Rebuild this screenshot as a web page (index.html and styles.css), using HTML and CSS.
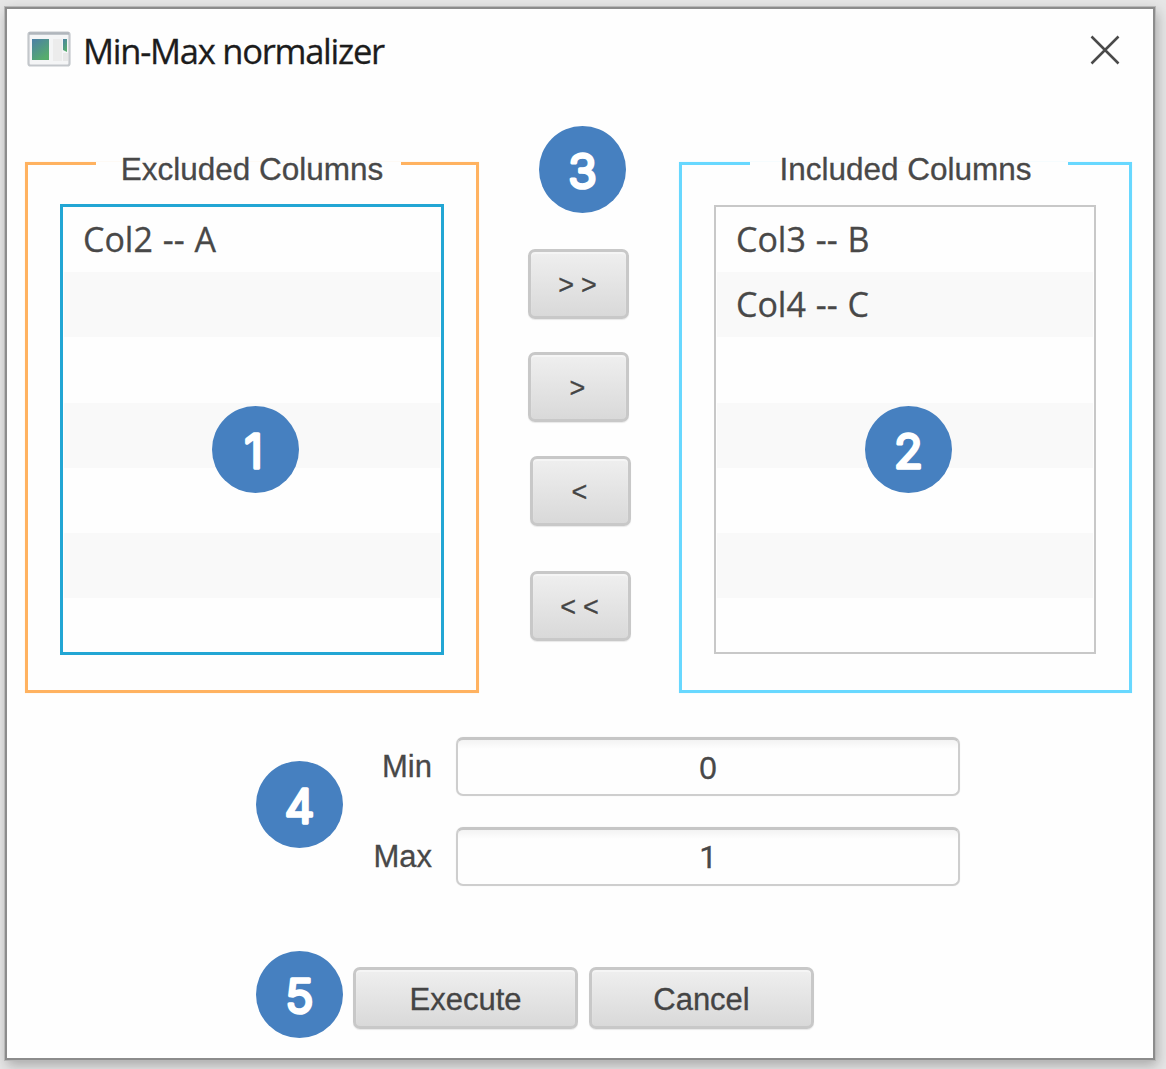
FILE: index.html
```html
<!DOCTYPE html>
<html lang="en">
<head>
<meta charset="utf-8">
<title>Min-Max normalizer</title>
<link rel="stylesheet" href="styles.css">
</head>
<body>
<main class="window">
  <header class="titlebar">
    <svg class="app-icon" width="44" height="37" viewBox="0 0 44 37">
      <defs>
        <linearGradient id="pane" x1="0" y1="0" x2=".6" y2="1"><stop offset="0" stop-color="#4b7fa6"/><stop offset="1" stop-color="#56ad6c"/></linearGradient>
      </defs>
      <rect x="1.5" y="1.5" width="41" height="33" rx="2" fill="#f4f5f6" stroke="#c3c7cb" stroke-width="2.2"/>
      <path d="M2 2.500H42" stroke="#b0b6bc" stroke-width="2.6"/>
      <rect x="5" y="8" width="17" height="21" fill="url(#pane)"/>
      <rect x="26" y="8" width="9" height="22" fill="#ececec"/>
      <path d="M36 8H40V21L36 19Z" fill="url(#pane)"/>
      <path d="M36 22H41V30H36Z" fill="#e8e8e8"/>
    </svg>
    <h1 class="title">Min-Max normalizer</h1>
    <svg class="close" width="30" height="30" viewBox="0 0 30 30"><path d="M1.500 1.500L28.500 28.500M28.500 1.500L1.500 28.500" stroke="#4a4a4a" stroke-width="2.5"/></svg>
  </header>

  <section class="panels">
    <div class="group excluded">
      <div class="caption"><span class="rule"></span><span class="caption-text">Excluded Columns</span><span class="rule end"></span></div>
      <ul class="list focused">
        <li>Col2 -- A</li><li></li><li></li><li></li><li></li><li></li><li></li>
      </ul>
      <svg class="badge over" viewBox="0 0 87 87"><circle cx="43.500" cy="43.500" r="43.500"/><text x="41.500" y="61.500">1</text></svg>
    </div>
    <div class="transfer">
      <svg class="badge" viewBox="0 0 87 87"><circle cx="43.500" cy="43.500" r="43.500"/><text x="43.500" y="61.500">3</text></svg>
      <button class="button move first">&gt;&gt;</button>
      <button class="button move second">&gt;</button>
      <button class="button move third">&lt;</button>
      <button class="button move fourth">&lt;&lt;</button>
    </div>
    <div class="group included">
      <div class="caption"><span class="rule"></span><span class="caption-text">Included Columns</span><span class="rule end"></span></div>
      <ul class="list">
        <li>Col3 -- B</li><li>Col4 -- C</li><li></li><li></li><li></li><li></li><li></li>
      </ul>
      <svg class="badge over" viewBox="0 0 87 87"><circle cx="43.500" cy="43.500" r="43.500"/><text x="43.500" y="61.500">2</text></svg>
    </div>
  </section>

  <section class="range">
    <svg class="badge" viewBox="0 0 87 87"><circle cx="43.500" cy="43.500" r="43.500"/><text x="43.500" y="61.500">4</text></svg>
    <div class="fields">
      <label class="label">Min</label><div class="field">0</div>
      <label class="label">Max</label><div class="field one">1</div>
    </div>
  </section>

  <footer class="actions">
    <svg class="badge" viewBox="0 0 87 87"><circle cx="43.500" cy="43.500" r="43.500"/><text x="43.500" y="61.500">5</text></svg>
    <button class="button action">Execute</button>
    <button class="button action">Cancel</button>
  </footer>
</main>
</body>
</html>
```

FILE: styles.css
```css
* { box-sizing: border-box; }
html { height: 100%; overflow: hidden; }
body {
  margin: 0;
  height: 1069px;
  padding: 7px 11px 9px 5px;
  overflow: hidden;
  background: #e6e6e6;
  font-family: "Liberation Sans", Arial, sans-serif;
  font-size: 31.5px;
  color: #484848;
  -webkit-text-stroke: .3px;
}
.window {
  height: 1053px;
  border: 2px solid #8c8c8c;
  background: #fefefe;
  box-shadow: 0 0 0 1px #b8b8b8, 2px 5px 12px rgba(0, 0, 0, .28);
}
.titlebar {
  display: flex;
  align-items: center;
  height: 84px;
  padding: 0 33px 4px 20px;
}
.app-icon { margin-right: 12px; }
.close { position: relative; top: 1px; }
.title {
  margin: 0;
  flex: 1;
  font: 400 34.5px/44px "Open Sans", "Noto Sans", sans-serif;
  letter-spacing: -1.25px;
  color: #1c1c1c;
  padding-top: 3px;
}
.panels {
  display: flex;
  align-items: flex-start;
  margin-top: 69px;
  padding-left: 18px;
}
.group {
  position: relative;
  width: 454px;
  height: 531px;
  padding-left: 32px;
  border: 3px solid #ffb260;
  border-top: 0;
  box-shadow: 0 0 1px #ffe6c8;
}
.included {
  width: 453px;
  border-color: #68d8ff;
  box-shadow: 0 0 1px #cdf2ff;
}
.caption {
  display: flex;
  justify-content: space-between;
  height: 42px;
  line-height: 14px;
  margin-left: -32px;
  white-space: nowrap;
}
.rule { width: 68px; height: 3px; background: #ffb260; }
.rule.end { width: 75px; }
.included .rule { background: #68d8ff; }
.included .rule.end { width: 61px; }
.excluded .caption-text { margin-left: 7px; }
.included .caption-text { margin-right: 7px; }
.list {
  list-style: none;
  margin: 0;
  padding: 0 1px;
  width: 382px;
  height: 449px;
  margin-top: 1px;
  border: 2px solid #c8c8c8;
  font-family: "Open Sans", "Noto Sans", sans-serif;
  font-size: 34px;
  word-spacing: 1px;
  overflow: hidden;
}
.list.focused {
  width: 384px;
  height: 451px;
  margin-top: 0;
  border: 3px solid #22a6d4;
}
.list li { height: 65.2px; line-height: 65px; padding-left: 19px; }
.list li:nth-child(even) { background: #f9f9f9; }
.badge { width: 87px; height: 87px; flex: none; display: block; }
.badge circle { fill: #4680c0; }
.badge text {
  font-family: Inter, Roboto, sans-serif;
  font-size: 47px;
  font-weight: 300;
  fill: #fff;
  stroke: #fff;
  stroke-width: 3.6px;
  -webkit-text-stroke: 0;
  stroke-linejoin: round;
  text-anchor: middle;
}
.badge.over { position: absolute; left: 184px; top: 244px; }
.included .badge.over { left: 183px; }
.transfer {
  display: flex;
  flex-direction: column;
  width: 200px;
  margin-top: -36px;
  padding-left: 49px;
}
.transfer .badge { margin-left: 11px; }
.button {
  padding: 0;
  border: 3px solid #c8c8c8;
  border-radius: 7px;
  background: linear-gradient(#efefef, #d9d9d9);
  box-shadow: inset 0 2px 1px #f5f5f5, 0 1px 1px #e8e8e8;
  font: 31.5px "Liberation Sans", Arial, sans-serif;
  color: #444;
  -webkit-text-stroke: .3px;
}
.move {
  width: 101px;
  height: 70px;
  font-size: 27px;
  letter-spacing: 7px;
  padding: 3px 0 0 5px;
}
.first { margin-top: 36px; }
.second { margin-top: 33px; }
.third { margin: 34px 0 0 2px; }
.fourth { margin: 45px 0 0 2px; }
.range {
  display: flex;
  align-items: flex-start;
  margin-top: 43px;
  padding-left: 249px;
}
.range .badge { margin-top: 25px; }
.fields {
  display: grid;
  grid-template-columns: 89px 504px;
  grid-template-rows: 60px 60px;
  column-gap: 24px;
  row-gap: 30px;
  align-items: center;
}
.label { text-align: right; font-size: 31px; padding-top: 1px; }
.field {
  height: 59px;
  border: 2px solid #cecece;
  border-top: 3px solid #c6c6c6;
  border-radius: 7px;
  background: linear-gradient(#f3f3f3, #fefefe 9px);
  box-shadow: 0 0 1px #ddd;
  font-size: 31.5px;
  line-height: 56px;
  text-align: center;
}
.field.one { font-family: Roboto, Arial, sans-serif; }
.actions {
  display: flex;
  align-items: flex-start;
  margin-top: 65px;
  padding-left: 249px;
}
.action { width: 225px; height: 62px; margin: 16px 0 0 10px; font-size: 31px; padding-top: 4px; }
.action + .action { margin-left: 11px; }
```
